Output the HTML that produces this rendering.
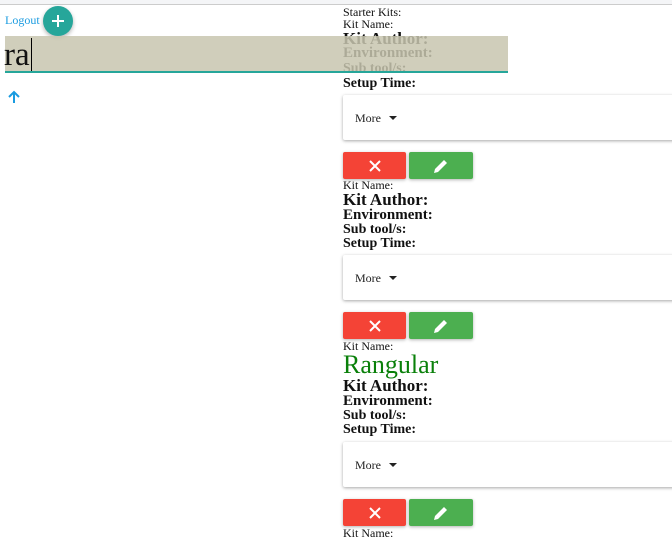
<!DOCTYPE html>
<html><head><meta charset="utf-8"><style>
*{margin:0;padding:0;box-sizing:border-box}
body{width:672px;height:533px;overflow:hidden;background:#fff;font-family:"Liberation Serif",serif;color:#111;position:relative}
.a{position:absolute;white-space:nowrap;line-height:1}
.s{font-size:12px}
.ka{font-size:17px;font-weight:bold}
.en{font-size:15px;font-weight:bold}
.st{font-size:14px;font-weight:bold}
.card{position:absolute;left:343px;width:340px;height:45px;background:#fff;box-shadow:0 1px 3px rgba(0,0,0,.35);border-radius:2px}
.card span{position:absolute;left:12px;top:16px;font-size:12px;color:#222}
.card i{position:absolute;left:46px;top:21px;border-left:4px solid transparent;border-right:4px solid transparent;border-top:4px solid #222}
.btn{position:absolute;height:27px;border-radius:2px;box-shadow:0 1px 3px rgba(0,0,0,.3)}
.r{left:343px;width:63px;background:#f44336}
.g{left:409px;width:64px;background:#4caf50}
.btn svg{position:absolute;left:50%;top:50%;transform:translate(-50%,-50%)}
</style></head><body>
<div style="position:absolute;left:0;top:0;width:672px;height:5px;background:#f4f5f7;border-bottom:1px solid #ccc"></div>
<div class="a" style="left:5px;top:14px;font-size:12px;color:#1a9be0">Logout</div>
<div style="position:absolute;left:43px;top:6px;width:30px;height:30px;border-radius:50%;background:#26a69a;box-shadow:0 2px 4px rgba(0,0,0,.3)">
<svg width="30" height="30"><path d="M15 9v12M9 15h12" stroke="#fff" stroke-width="2"/></svg></div>

<div class="a s" style="left:343px;top:6px">Starter Kits:</div>
<div class="a s" style="left:343px;top:18px">Kit Name:</div>
<div class="a ka" style="left:343px;top:30px">Kit Author:</div>
<div class="a en" style="left:343px;top:46px">Environment:</div>
<div class="a st" style="left:343px;top:62px">Sub tool/s:</div>
<div class="a st" style="left:343px;top:77px">Setup Time:</div>

<div style="position:absolute;left:5px;top:36px;width:503px;height:37px;background:rgba(200,198,175,.85);border-bottom:2px solid #26a69a"></div>
<div class="a" style="left:4px;top:39px;font-size:33px;color:#111">ra</div>
<div style="position:absolute;left:31px;top:38px;width:1px;height:33px;background:#000"></div>
<svg style="position:absolute;left:7px;top:90px" width="14" height="14"><path d="M7 13V2M2 7l5-5 5 5" stroke="#1a9be0" stroke-width="2" fill="none"/></svg>

<div class="card" style="top:95px"><span>More</span><i></i></div>
<div class="btn r" style="top:152px"><svg width="12" height="12"><path d="M1 1l10 10M11 1L1 11" stroke="#fff" stroke-width="2"/></svg></div>
<div class="btn g" style="top:152px"><svg width="16" height="16"><path d="M1 15l1-4 9-9 3 3-9 9z" fill="#fff"/></svg></div>

<div class="a s" style="left:343px;top:179px">Kit Name:</div>
<div class="a ka" style="left:343px;top:191px">Kit Author:</div>
<div class="a en" style="left:343px;top:208px">Environment:</div>
<div class="a st" style="left:343px;top:223px">Sub tool/s:</div>
<div class="a st" style="left:343px;top:237px">Setup Time:</div>
<div class="card" style="top:255px"><span>More</span><i></i></div>
<div class="btn r" style="top:312px"><svg width="12" height="12"><path d="M1 1l10 10M11 1L1 11" stroke="#fff" stroke-width="2"/></svg></div>
<div class="btn g" style="top:312px"><svg width="16" height="16"><path d="M1 15l1-4 9-9 3 3-9 9z" fill="#fff"/></svg></div>

<div class="a s" style="left:343px;top:340px">Kit Name:</div>
<div class="a" style="left:343px;top:352px;font-size:26px;color:#0a800a">Rangular</div>
<div class="a ka" style="left:343px;top:377px">Kit Author:</div>
<div class="a en" style="left:343px;top:394px">Environment:</div>
<div class="a st" style="left:343px;top:409px">Sub tool/s:</div>
<div class="a st" style="left:343px;top:423px">Setup Time:</div>
<div class="card" style="top:442px"><span>More</span><i></i></div>
<div class="btn r" style="top:499px"><svg width="12" height="12"><path d="M1 1l10 10M11 1L1 11" stroke="#fff" stroke-width="2"/></svg></div>
<div class="btn g" style="top:499px"><svg width="16" height="16"><path d="M1 15l1-4 9-9 3 3-9 9z" fill="#fff"/></svg></div>
<div class="a s" style="left:343px;top:527px">Kit Name:</div>
</body></html>
